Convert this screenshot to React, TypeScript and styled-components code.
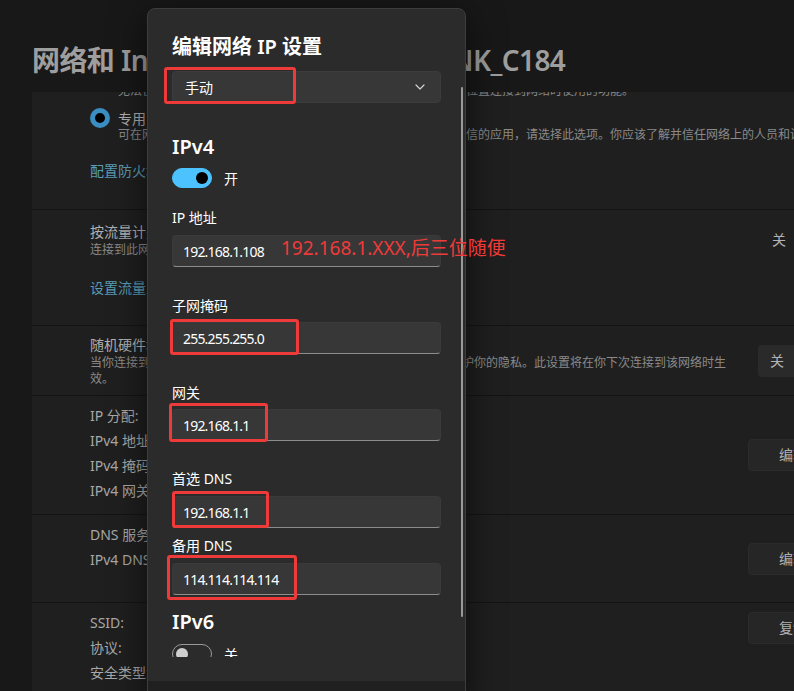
import React from 'react'
import styled, { createGlobalStyle } from 'styled-components'

const FONT = `"Segoe UI", "Noto Sans", "Noto Sans CJK SC", sans-serif`
const RED = '#ef3a3a'

const GlobalStyle = createGlobalStyle`
	html, body {
		margin: 0;
		padding: 0;
		background: #181818;
		overflow: hidden;
	}
	body {
		font-family: ${FONT};
	}
	* {
		box-sizing: border-box;
	}
`

const Screen = styled.div`
	position: relative;
	width: 794px;
	height: 691px;
	overflow: hidden;
	background: #181818;
`

const Crumbs = styled.h1`
	margin: 0;
	padding: 40px 0 0 32px;
	height: 92px;
	font-size: 28px;
	line-height: 40px;
	font-weight: 600;
	letter-spacing: -0.6px;
	color: #9e9e9e;
	white-space: nowrap;
`

const Sep = styled.span`
	margin: 0 15px;
	font-weight: 400;
`

const Panel = styled.div`
	margin-left: 32px;
	width: 818px;
	height: 599px;
	overflow: hidden;
	background: #141414;
	display: flex;
	flex-direction: column;
	gap: 1px;
`

const Card = styled.div<{ $h: number }>`
	flex: none;
	height: ${({ $h }) => $h}px;
	padding: 0 12px 0 58px;
	background: #1f1f1f;
	display: flex;
	justify-content: space-between;
	align-items: flex-start;
	gap: 24px;

	&:first-child {
		margin-top: -9px;
	}
`

const Body = styled.div<{ $pt: number }>`
	flex: 1;
	min-width: 0;
	padding-top: ${({ $pt }) => $pt}px;
`

const Title = styled.div`
	font-size: 14px;
	line-height: 20px;
	color: #b0b0b0;
`

const Desc = styled.div<{ $indent?: number; $nowrap?: boolean }>`
	font-size: 12px;
	line-height: 16px;
	color: #8a8a8a;
	padding-left: ${({ $indent }) => $indent || 0}px;
	white-space: ${({ $nowrap }) => ($nowrap ? 'nowrap' : 'normal')};
`

const Link = styled.div<{ $mt: number }>`
	margin-top: ${({ $mt }) => $mt}px;
	font-size: 14px;
	line-height: 20px;
	color: #5b9bb3;
`

const Info = styled.div`
	font-size: 14px;
	line-height: 25px;
	color: #a8a8a8;
`

const RadioLine = styled.div`
	margin-top: 10px;
	display: flex;
	align-items: center;
	gap: 8px;
	height: 18px;
	font-size: 14px;
	color: #b0b0b0;
`

const Radio = styled.span`
	width: 20px;
	height: 20px;
	border-radius: 50%;
	border: 5px solid #3a8ec2;
	background: #000;
`

const Side = styled.div<{ $mt: number }>`
	flex: none;
	margin-top: ${({ $mt }) => $mt}px;
	display: flex;
	align-items: center;
	gap: 12px;
	font-size: 14px;
	line-height: 20px;
	color: #b3b3b3;
`

const DimSwitch = styled.span`
	width: 40px;
	height: 20px;
	border-radius: 10px;
	border: 1px solid #8a8a8a;
`

const Combo = styled.div`
	width: 80px;
	height: 32px;
	padding-left: 12px;
	border-radius: 4px;
	background: #2a2a2a;
	display: flex;
	align-items: center;
	color: #b3b3b3;
`

const Button = styled.div`
	width: 90px;
	height: 32px;
	border-radius: 4px;
	background: #262626;
	border: 1px solid #2b2b2b;
	display: flex;
	align-items: center;
	justify-content: center;
	color: #b0b0b0;
`

/* dialog */

const Dialog = styled.div`
	position: absolute;
	left: 147px;
	top: 8px;
	width: 319px;
	height: 700px;
	background: #2b2b2b;
	border: 1px solid #3d3d3d;
	border-radius: 8px;
	box-shadow: 0 8px 36px rgba(0, 0, 0, 0.6);
	display: flex;
	flex-direction: column;
`

const DialogBody = styled.div`
	flex: none;
	height: 648px;
	padding: 24px 24px 0;
	overflow-x: visible;
	overflow-y: clip;
	color: #fff;
`

const Footer = styled.div`
	flex: 1;
	margin-top: 24px;
	background: #202020;
	border-radius: 0 0 8px 8px;
`

const ScrollThumb = styled.div`
	position: absolute;
	right: 2px;
	top: 78px;
	width: 2px;
	height: 530px;
	border-radius: 1px;
	background: #9a9a9a;
`

const DialogTitle = styled.h2`
	margin: 0;
	font-size: 20px;
	line-height: 28px;
	font-weight: 600;
`

const Section = styled.h3<{ $mt: number }>`
	margin: ${({ $mt }) => $mt}px 0 0;
	font-size: 20px;
	line-height: 28px;
	font-weight: 600;
`

const Wrap = styled.div<{ $mt: number }>`
	position: relative;
	margin-top: ${({ $mt }) => $mt}px;
`

const Select = styled.div`
	height: 32px;
	padding: 0 15px 0 12px;
	border-radius: 4px;
	background: #373737;
	border: 1px solid #3c3c3c;
	display: flex;
	align-items: center;
	justify-content: space-between;
	font-size: 14px;
`

const TextBox = styled.div`
	height: 32px;
	padding: 0 10px;
	border-radius: 4px;
	background: #373737;
	border: 1px solid #3a3a3a;
	border-bottom-color: #8c8c8c;
	display: flex;
	align-items: center;
	font-size: 14px;
	letter-spacing: -0.8px;
	color: #fff;
`

const Label = styled.div<{ $mt: number }>`
	margin-top: ${({ $mt }) => $mt}px;
	font-size: 14px;
	line-height: 20px;
`

const ToggleRow = styled.div<{ $mt: number }>`
	margin-top: ${({ $mt }) => $mt}px;
	display: flex;
	align-items: center;
	gap: 12px;
	height: 20px;
	font-size: 14px;
`

const Switch = styled.span<{ $on: boolean }>`
	position: relative;
	width: 40px;
	height: 20px;
	border-radius: 10px;
	background: ${({ $on }) => ($on ? '#4cc2ff' : 'transparent')};
	border: 1px solid ${({ $on }) => ($on ? '#4cc2ff' : '#9a9a9a')};

	&::after {
		content: '';
		position: absolute;
		top: 3px;
		left: ${({ $on }) => ($on ? '23px' : '3px')};
		width: 12px;
		height: 12px;
		border-radius: 50%;
		background: ${({ $on }) => ($on ? '#000' : '#cfcfcf')};
	}
`

/* red annotations drawn over the screenshot */
const Mark = styled.span<{ $x: number; $y: number; $w: number; $h: number }>`
	position: absolute;
	left: ${({ $x }) => $x}px;
	top: ${({ $y }) => $y}px;
	width: ${({ $w }) => $w}px;
	height: ${({ $h }) => $h}px;
	border: 3px solid ${RED};
	border-radius: 3px;
	pointer-events: none;
`

const Note = styled.span`
	position: absolute;
	left: 109px;
	top: 1px;
	font-size: 19px;
	line-height: 24px;
	color: ${RED};
	white-space: nowrap;
	z-index: 2;
`

const ChevronDown = () => (
	<svg width="10" height="6" viewBox="0 0 10 6">
		<path d="M1 1l4 4 4-4" fill="none" stroke="#d0d0d0" strokeWidth="1.2" strokeLinecap="round" strokeLinejoin="round" />
	</svg>
)

type Box = { x: number; y: number; w: number; h: number }

const Field = ({ label, value, lm, im, mark }: { label: string; value: string; lm: number; im: number; mark?: Box }) => (
	<>
		<Label $mt={lm}>{label}</Label>
		<Wrap $mt={im}>
			<TextBox>{value}</TextBox>
			{mark && <Mark $x={mark.x} $y={mark.y} $w={mark.w} $h={mark.h} />}
		</Wrap>
	</>
)

const App: React.FC = () => {
	return (
		<>
			<GlobalStyle />
			<Screen>
				<Crumbs>
					网络和 Internet<Sep>›</Sep>WLAN<Sep>›</Sep>TP-LINK_C184
				</Crumbs>
				<Panel>
					<Card $h={126}>
						<Body $pt={0}>
							<Desc $indent={28} $nowrap>
								无法在网络上发现你的设备。例如，在家中、工作场所或任何其他位置连接到网络时使用的功能。
							</Desc>
							<RadioLine>
								<Radio />
								专用
							</RadioLine>
							<Desc $indent={28} $nowrap>
								可在网络上发现你的设备。如果需要文件共享或使用通过此网络通信的应用，请选择此选项。你应该了解并信任网络上的人员和设备。
							</Desc>
							<Link $mt={18}>配置防火墙和安全设置</Link>
						</Body>
					</Card>
					<Card $h={115}>
						<Body $pt={12}>
							<Title>按流量计费的网络</Title>
							<Desc>连接到此网络时，某些应用的工作方式可能会改变以减少数据使用量</Desc>
							<Link $mt={20}>设置流量上限以帮助控制此网络上的数据使用量</Link>
						</Body>
						<Side $mt={20}>
							关<DimSwitch />
						</Side>
					</Card>
					<Card $h={69}>
						<Body $pt={9}>
							<Title>随机硬件地址</Title>
							<Desc>
								当你连接到此网络时，使用随机硬件地址可让他人更难跟踪你，帮助保护你的隐私。此设置将在你下次连接到该网络时生效。
							</Desc>
						</Body>
						<Side $mt={19}>
							<Combo>关</Combo>
						</Side>
					</Card>
					<Card $h={118}>
						<Body $pt={7}>
							<Info>IP 分配:</Info>
							<Info>IPv4 地址:</Info>
							<Info>IPv4 掩码:</Info>
							<Info>IPv4 网关:</Info>
						</Body>
						<Side $mt={43}>
							<Button>编辑</Button>
						</Side>
					</Card>
					<Card $h={87}>
						<Body $pt={7}>
							<Info>DNS 服务器分配:</Info>
							<Info>IPv4 DNS 服务器:</Info>
						</Body>
						<Side $mt={28}>
							<Button>编辑</Button>
						</Side>
					</Card>
					<Card $h={120}>
						<Body $pt={7}>
							<Info>SSID:</Info>
							<Info>协议:</Info>
							<Info>安全类型:</Info>
						</Body>
						<Side $mt={9}>
							<Button>复制</Button>
						</Side>
					</Card>
				</Panel>

				<Dialog>
					<DialogBody>
						<DialogTitle>编辑网络 IP 设置</DialogTitle>
						<Wrap $mt={10}>
							<Select>
								手动
								<ChevronDown />
							</Select>
							<Mark $x={-8} $y={-4} $w={132} $h={37} />
						</Wrap>

						<Section $mt={30}>IPv4</Section>
						<ToggleRow $mt={7}>
							<Switch $on />开
						</ToggleRow>

						<Label $mt={20}>IP 地址</Label>
						<Wrap $mt={7}>
							<TextBox>192.168.1.108</TextBox>
							<Note>192.168.1.XXX,后三位随便</Note>
						</Wrap>

						<Field label="子网掩码" value="255.255.255.0" lm={29} im={6} mark={{ x: -2, y: -3, w: 129, h: 36 }} />
						<Field label="网关" value="192.168.1.1" lm={29} im={6} mark={{ x: -3, y: -6, w: 99, h: 39 }} />
						<Field label="首选 DNS" value="192.168.1.1" lm={28} im={7} mark={{ x: 0, y: -5, w: 97, h: 37 }} />
						<Field label="备用 DNS" value="114.114.114.114" lm={8} im={7} mark={{ x: -5, y: -8, w: 130, h: 45 }} />

						<Section $mt={13}>IPv6</Section>
						<ToggleRow $mt={8}>
							<Switch $on={false} />关
						</ToggleRow>
					</DialogBody>
					<Footer />
					<ScrollThumb />
				</Dialog>
			</Screen>
		</>
	)
}

export default App
